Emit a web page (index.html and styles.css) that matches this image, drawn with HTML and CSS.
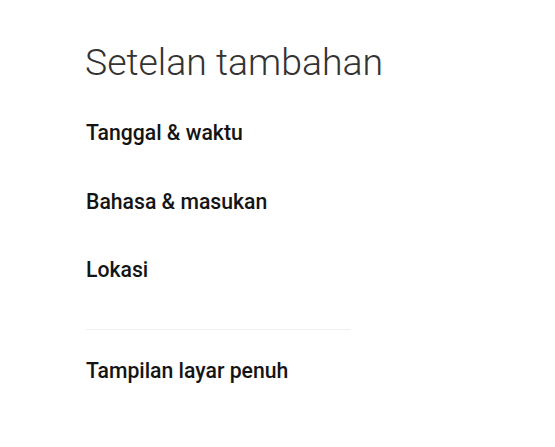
FILE: index.html
```html
<!DOCTYPE html>
<html>
<head>
<meta charset="utf-8">
<link rel="stylesheet" href="styles.css">
</head>
<body>
<div class="page">
  <h1 class="title">Setelan tambahan</h1>
  <ul class="list list-main">
    <li class="item">Tanggal &amp; waktu</li>
    <li class="item">Bahasa &amp; masukan</li>
    <li class="item">Lokasi</li>
  </ul>
  <div class="divider"></div>
  <ul class="list list-extra">
    <li class="item">Tampilan layar penuh</li>
  </ul>
</div>
</body>
</html>
```
FILE: styles.css
```css
html, body {
  margin: 0;
  padding: 0;
  background: #ffffff;
}
.page {
  width: 555px;
  height: 447px;
  padding: 0 0 0 85px;
  box-sizing: border-box;
  font-family: Roboto, "Liberation Sans", sans-serif;
}
.title {
  margin: 0;
  padding-top: 37px;
  font-size: 37.4px;
  font-weight: 300;
  line-height: 50px;
  color: #333333;
}
.list {
  list-style: none;
  margin: 0;
  padding: 0 0 0 1px;
}
.list-main {
  margin-top: 12px;
}
.list-extra {
  margin-top: 7px;
}
.item {
  font-size: 21.2px;
  font-weight: 500;
  color: #141414;
  height: 68.5px;
  line-height: 68px;
}
.divider {
  width: 265px;
  height: 1px;
  background: #efefef;
  margin: 24px 0 0 1px;
}
```
